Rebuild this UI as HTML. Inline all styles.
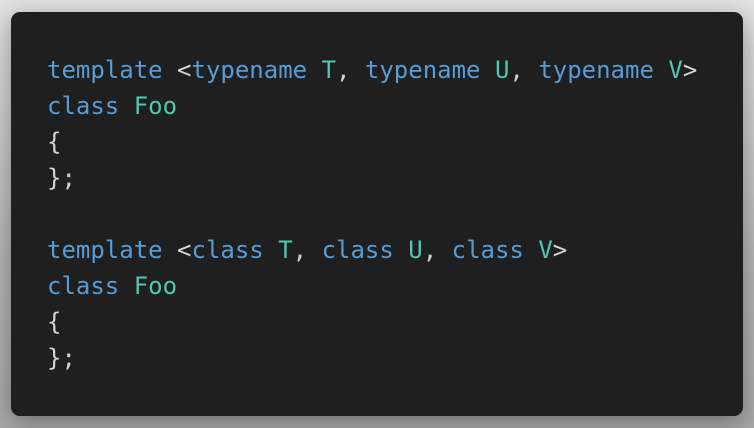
<!DOCTYPE html>
<html><head><style>
html,body{margin:0;width:754px;height:428px;overflow:hidden}
body{background:linear-gradient(#e2e2e2,#b5b5b5 60%,#a8a8a8);position:relative}
.card{position:absolute;left:11px;top:12px;width:732px;height:404px;background:#1f1f1f;border-radius:9px;box-shadow:0 6px 24px rgba(0,0,0,.35)}
pre{margin:0;position:absolute;left:47px;top:52px;font-family:"DejaVu Sans Mono",monospace;font-size:24px;line-height:36px;color:#d4d4d4}
.k{color:#569cd6}.t{color:#4ec9b0}
</style></head><body><div class="card"></div>
<pre><span class="k">template</span> &lt;<span class="k">typename</span> <span class="t">T</span>, <span class="k">typename</span> <span class="t">U</span>, <span class="k">typename</span> <span class="t">V</span>&gt;
<span class="k">class</span> <span class="t">Foo</span>
{
};

<span class="k">template</span> &lt;<span class="k">class</span> <span class="t">T</span>, <span class="k">class</span> <span class="t">U</span>, <span class="k">class</span> <span class="t">V</span>&gt;
<span class="k">class</span> <span class="t">Foo</span>
{
};</pre>
</body></html>
